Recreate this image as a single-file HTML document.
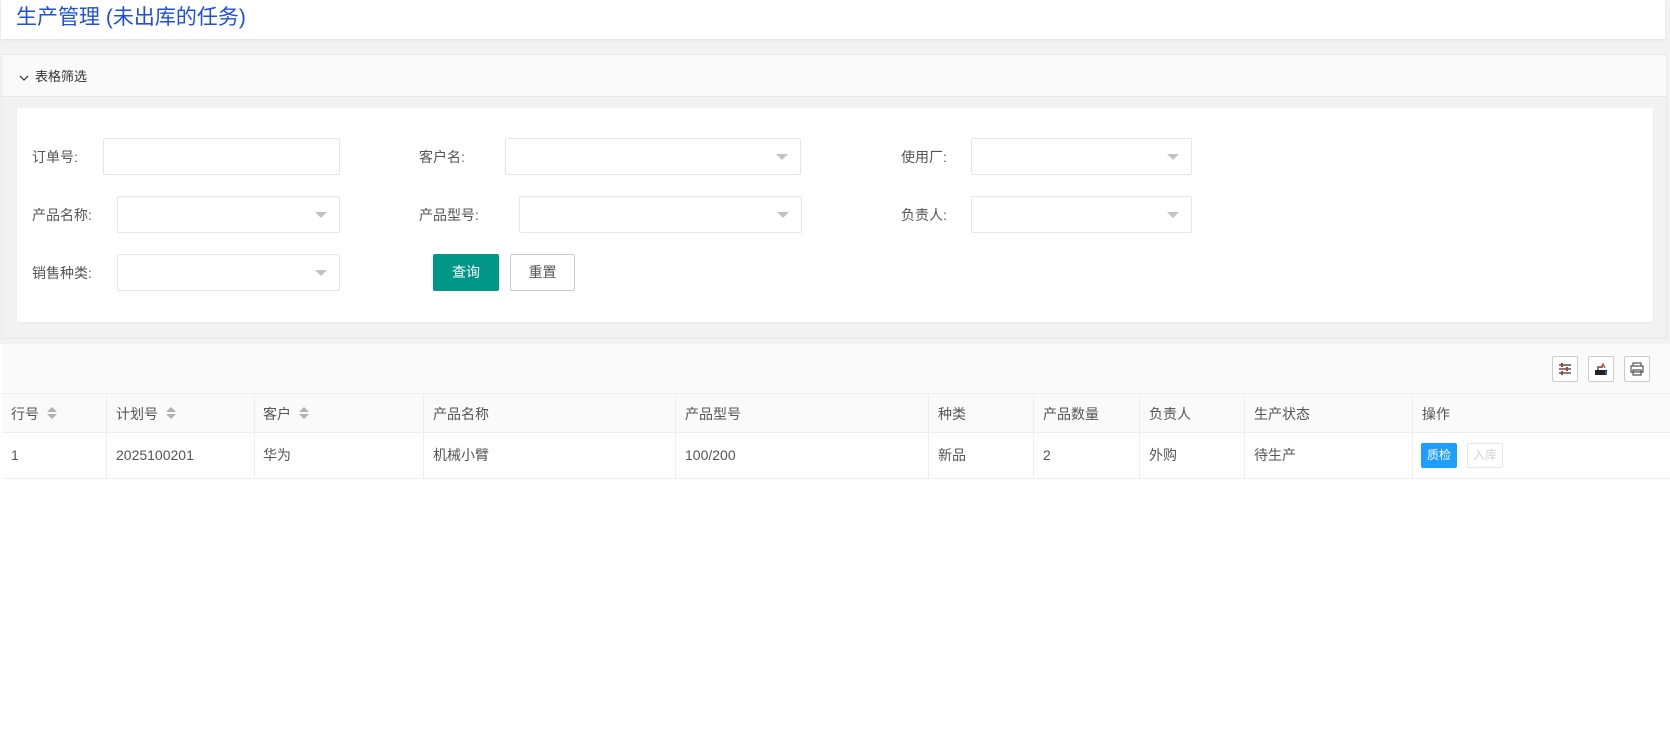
<!DOCTYPE html>
<html><head><meta charset="utf-8"><style>
*{box-sizing:border-box;margin:0;padding:0}
body{width:1670px;height:755px;background:#fff;font-family:"Liberation Sans","Noto Sans CJK SC",sans-serif;font-size:14px;color:#555;position:relative;overflow:hidden}
.a{position:absolute}
.inp{position:absolute;border:1px solid #e6e6e6;border-radius:2px;background:#fff;height:37px}
.inp.s::after{content:"";position:absolute;right:12px;top:15px;border-left:6px solid transparent;border-right:6px solid transparent;border-top:6px solid #c2c2c2}
.lbl{position:absolute;font-size:14px;color:#555;line-height:20px}
.col{position:absolute;top:395px;height:84px;border-left:1px solid #eee}
.th{position:absolute;top:395px;height:38px;line-height:38px;font-size:14px;color:#555}
.td{position:absolute;top:433px;height:45px;line-height:45px;font-size:14px;color:#555}
.sort{display:inline-block;vertical-align:middle;margin-left:8px;width:10px;height:14px;position:relative;top:-2px}
.sort::before{content:"";position:absolute;left:0;top:1px;border-left:5px solid transparent;border-right:5px solid transparent;border-bottom:5px solid #b2b2b2}
.sort::after{content:"";position:absolute;left:0;top:8px;border-left:5px solid transparent;border-right:5px solid transparent;border-top:5px solid #b2b2b2}
.tb{position:absolute;top:356px;width:26px;height:26px;border:1px solid #ccc;border-radius:2px;background:#fff}
</style></head><body>
<div class="a" style="left:0;top:0;width:1670px;height:345px;background:#f2f2f2"></div>
<div class="a" style="left:1px;top:0;width:1664px;height:39px;background:#fff;box-shadow:0 1px 2px rgba(0,0,0,.08)"></div>
<div class="a" style="left:16px;top:4px;font-size:21px;color:#1e4fe0;line-height:28px">生产管理 (未出库的任务)</div>

<div class="a" style="left:1px;top:54px;width:1666px;height:285px;background:#f2f2f2;border:1px solid #e8e8e8"></div>
<div class="a" style="left:2px;top:55px;width:1664px;height:42px;background:#fafafa;border-bottom:1px solid #e6e6e6"></div>
<div class="a" style="left:19px;top:66px;font-size:13px;color:#333">
<svg width="10" height="8" style="vertical-align:middle;margin-right:6px"><path d="M1 2l4 4 4-4" stroke="#333" fill="none" stroke-width="1.2"/></svg>表格筛选</div>
<div class="a" style="left:17px;top:108px;width:1636px;height:214px;background:#fff;border-radius:2px;box-shadow:0 1px 2px rgba(0,0,0,.05)"></div>

<div class="lbl" style="left:32px;top:147px">订单号:</div>
<div class="inp" style="left:103px;top:138px;width:237px"></div>
<div class="lbl" style="left:419px;top:147px">客户名:</div>
<div class="inp s" style="left:505px;top:138px;width:296px"></div>
<div class="lbl" style="left:901px;top:147px">使用厂:</div>
<div class="inp s" style="left:971px;top:138px;width:221px"></div>

<div class="lbl" style="left:32px;top:205px">产品名称:</div>
<div class="inp s" style="left:117px;top:196px;width:223px"></div>
<div class="lbl" style="left:419px;top:205px">产品型号:</div>
<div class="inp s" style="left:519px;top:196px;width:283px"></div>
<div class="lbl" style="left:901px;top:205px">负责人:</div>
<div class="inp s" style="left:971px;top:196px;width:221px"></div>

<div class="lbl" style="left:32px;top:263px">销售种类:</div>
<div class="inp s" style="left:117px;top:254px;width:223px"></div>
<div class="a" style="left:433px;top:254px;width:66px;height:37px;background:#009688;border-radius:2px;color:#fff;text-align:center;line-height:37px">查询</div>
<div class="a" style="left:510px;top:254px;width:65px;height:37px;border:1px solid #c9c9c9;border-radius:2px;color:#555;text-align:center;line-height:35px">重置</div>

<div class="a" style="left:2px;top:344px;width:1668px;height:51px;background:#fafafa"></div>
<div class="tb" style="left:1552px"><svg width="24" height="24"><path d="M6 8h12M6 12h12M6 16h12" stroke="#333" stroke-width="1.3"/><path d="M9 6v4M14 10v4M9 14v4" stroke="#c0392b" stroke-width="2"/></svg></div>
<div class="tb" style="left:1588px"><svg width="24" height="24"><path d="M6 13h12v5H6z" fill="#222"/><path d="M9 13v-3h5" stroke="#333" fill="none" stroke-width="1.3"/><path d="M12 11l2-4 2 4" stroke="#c0392b" fill="none" stroke-width="1.2"/><path d="M17 14v4" stroke="#2a6fd6" stroke-width="1.5"/></svg></div>
<div class="tb" style="left:1624px"><svg width="24" height="24"><path d="M8 9V6h8v3M6 9h12v6H6zM8 13h8v5H8z" stroke="#555" fill="#fff" stroke-width="1.2"/></svg></div>

<div class="a" style="left:2px;top:393px;width:1668px;height:40px;background:#fafafa;border-top:1px solid #eee;border-bottom:1px solid #eee"></div>
<div class="a" style="left:2px;top:478px;width:1668px;border-top:1px solid #eee"></div>
<div class="col" style="left:106px"></div><div class="col" style="left:254px"></div><div class="col" style="left:423px"></div><div class="col" style="left:675px"></div><div class="col" style="left:928px"></div><div class="col" style="left:1033px"></div><div class="col" style="left:1139px"></div><div class="col" style="left:1244px"></div><div class="col" style="left:1412px"></div>

<div class="th" style="left:11px">行号<span class="sort"></span></div>
<div class="th" style="left:116px">计划号<span class="sort"></span></div>
<div class="th" style="left:263px">客户<span class="sort"></span></div>
<div class="th" style="left:433px">产品名称</div>
<div class="th" style="left:685px">产品型号</div>
<div class="th" style="left:938px">种类</div>
<div class="th" style="left:1043px">产品数量</div>
<div class="th" style="left:1149px">负责人</div>
<div class="th" style="left:1254px">生产状态</div>
<div class="th" style="left:1422px">操作</div>

<div class="td" style="left:11px">1</div>
<div class="td" style="left:116px">2025100201</div>
<div class="td" style="left:263px">华为</div>
<div class="td" style="left:433px">机械小臂</div>
<div class="td" style="left:685px">100/200</div>
<div class="td" style="left:938px">新品</div>
<div class="td" style="left:1043px">2</div>
<div class="td" style="left:1149px">外购</div>
<div class="td" style="left:1254px">待生产</div>
<div class="a" style="left:1421px;top:443px;width:36px;height:25px;background:#1e9fff;border-radius:2px;color:#fff;font-size:12px;text-align:center;line-height:25px">质检</div>
<div class="a" style="left:1467px;top:443px;width:36px;height:25px;border:1px solid #e6e6e6;border-radius:2px;color:#d2d2d2;font-size:12px;text-align:center;line-height:23px">入库</div>
</body></html>
